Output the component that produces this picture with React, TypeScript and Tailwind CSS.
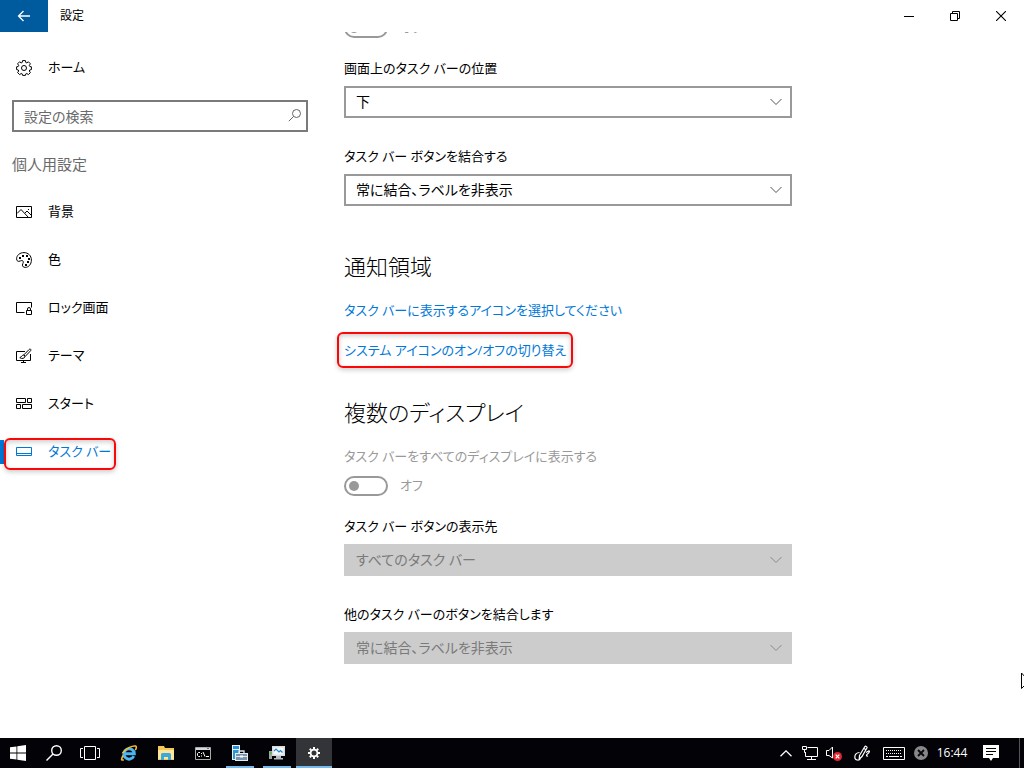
import { useState } from "react";
import type { ReactNode } from "react";

type NavItem = { id: string; label: string; icon: ReactNode };

function NavIcon({ children }: { children: ReactNode }) {
  return (
    <svg
      viewBox="0 0 16 16"
      className="size-4 shrink-0"
      fill="none"
      stroke="currentColor"
      strokeWidth="1"
      aria-hidden="true"
    >
      {children}
    </svg>
  );
}

const NAV_ITEMS: NavItem[] = [
  {
    id: "background",
    label: "背景",
    icon: (
      <NavIcon>
        <path d="M.5 2.500h15v11H.5zM1 9.500l4-4 7.500 8M9 9l2-2 4.500 4.500" />
        <path d="M12 5h1v1h-1z" fill="currentColor" stroke="none" />
      </NavIcon>
    ),
  },
  {
    id: "colors",
    label: "色",
    icon: (
      <NavIcon>
        <path d="M8 .6C3.800.6.6 3.300.6 6.800c0 1.700 1 2.600 2.200 2.600 1.300 0 1.900-.9 3-.9 1 0 1.500.7 1.500 1.700 0 1.200-.9 1.600-.9 2.900 0 1.400 1.200 2.300 2.800 2.300 3.500 0 6.200-3.200 6.200-7.300C15.400 3.700 12.200.6 8 .6z" />
        <g fill="currentColor" stroke="none">
          <path d="M3 5h2v2H3zM6 3h2v2H6zM10 3h2v2h-2zM12 6h2v2h-2zM11 9h2v2h-2zM9 12h2v2H9z" />
        </g>
      </NavIcon>
    ),
  },
  {
    id: "lockscreen",
    label: "ロック画面",
    icon: (
      <NavIcon>
        <path d="M8.500 12.500h-8v-10h15v5M10.500 10.500h5v4h-5zM11.500 10.500v-1.500a1.500 1.500 0 0 1 3 0v1.500" />
      </NavIcon>
    ),
  },
  {
    id: "themes",
    label: "テーマ",
    icon: (
      <NavIcon>
        <path d="M9 3.500H.5v9h14V6M5 14.500h5M7.500 12.500v2" />
        <path d="M14.500 1.200c.8.6.3 1.300-.2 1.900L9.300 8.300 7.800 6.900l5.100-5.200c.5-.5 1.100-.9 1.600-.5zM7.600 7.200c-2-.1-2 1.900-3.800 2.500 2 1.400 5 .8 5.200-1.200z" />
      </NavIcon>
    ),
  },
  {
    id: "start",
    label: "スタート",
    icon: (
      <NavIcon>
        <path d="M.5 2.500h9v4h-9zM11.500 2.500h4v4h-4zM.5 8.500h4v4h-4zM6.500 8.500h9v4h-9z" />
      </NavIcon>
    ),
  },
  {
    id: "taskbar",
    label: "タスク バー",
    icon: (
      <NavIcon>
        <path d="M.5 3.500h15v8H.5zM.5 9.500h15" />
      </NavIcon>
    ),
  },
];

function GearIcon() {
  return (
    <NavIcon>
      <path d="M6.600.6h2.800l.4 1.900 1 .4 1.600-1.100 2 2-1.100 1.600.4 1 1.700.4v2.800l-1.700.4-.4 1 1.100 1.600-2 2-1.600-1.100-1 .4-.4 1.500H6.600l-.4-1.500-1-.4-1.600 1.100-2-2 1.100-1.600-.4-1L.6 9.600V6.800l1.700-.4.4-1-1.100-1.600 2-2 1.600 1.100 1-.4z" />
      <circle cx="8" cy="8" r="2.500" />
    </NavIcon>
  );
}

// Red frame laid over the element it marks
function Highlight({ className }: { className: string }) {
  return (
    <span
      aria-hidden="true"
      className={`pointer-events-none absolute rounded-md border-2 border-[#fa0808] shadow-[0_2px_5px_rgba(0,0,0,0.2),inset_0_2px_5px_rgba(0,0,0,0.2)] ${className}`}
    />
  );
}

function SelectField({
  id,
  label,
  value,
  disabled,
}: {
  id: string;
  label: string;
  value: string;
  disabled?: boolean;
}) {
  return (
    <div>
      <label htmlFor={id} className="mb-2 block text-[13px] leading-5">
        {label}
      </label>
      <div className="relative">
        <select
          id={id}
          disabled={disabled}
          className="block h-8 w-full appearance-none border-2 border-[#999] bg-white px-[10px] text-sm text-black disabled:border-[#ccc] disabled:bg-[#ccc] disabled:text-[#7a7a7a] disabled:opacity-100"
        >
          <option>{value}</option>
        </select>
        <svg
          viewBox="0 0 12 8"
          className={`pointer-events-none absolute top-3 right-[10px] h-2 w-3 ${disabled ? "text-[#8a8a8a]" : "text-[#555]"}`}
          fill="none"
          stroke="currentColor"
          aria-hidden="true"
        >
          <path d="M.5 1 6 6.500 11.500 1" />
        </svg>
      </div>
    </div>
  );
}

function Toggle({ label }: { label: string }) {
  return (
    <div className="flex h-5 items-center gap-3 text-[13px] text-[#999]">
      <input
        type="checkbox"
        role="switch"
        disabled
        aria-label={label}
        className="h-5 w-11 shrink-0 appearance-none rounded-full border-2 border-[#999] before:m-[3px] before:block before:size-[10px] before:rounded-full before:bg-[#999]"
      />
      <span>オフ</span>
    </div>
  );
}

function TitleBar() {
  return (
    <header className="flex h-8 shrink-0 items-center bg-white">
      <button type="button" aria-label="戻る" className="flex h-8 w-12 items-center justify-center bg-[#005a9e] text-white">
        <svg viewBox="0 0 14 12" className="h-3 w-[14px]" fill="none" stroke="currentColor" strokeWidth="1.300">
          <path d="M13 6H1.500M6.500 1l-5 5 5 5" />
        </svg>
      </button>
      <h1 className="ml-3 text-xs">設定</h1>
      <div className="ml-auto flex">
        <button type="button" aria-label="最小化" className="flex h-8 w-[46px] items-center justify-center">
          <svg viewBox="0 0 10 10" className="size-[10px]" stroke="currentColor">
            <path d="M0 5.500h10" />
          </svg>
        </button>
        <button type="button" aria-label="元に戻す" className="flex h-8 w-[46px] items-center justify-center">
          <svg viewBox="0 0 10 10" className="size-[10px]" fill="none" stroke="currentColor">
            <path d="M.5 2.500h7v7h-7zM2.500 2.500v-2h7v7h-2" />
          </svg>
        </button>
        <button type="button" aria-label="閉じる" className="flex h-8 w-[46px] items-center justify-center">
          <svg viewBox="0 0 10 10" className="size-[10px]" stroke="currentColor" strokeWidth="1.100">
            <path d="M0 0l10 10M10 0L0 10" />
          </svg>
        </button>
      </div>
    </header>
  );
}

function Sidebar() {
  const [active, setActive] = useState("taskbar");

  return (
    <nav className="w-80 shrink-0 pt-3">
      <a href="#home" className="flex h-12 items-center gap-4 pl-4 text-[13px]">
        <GearIcon />
        <span>ホーム</span>
      </a>

      <div className="relative mx-3 mt-2">
        <input
          type="text"
          aria-label="設定の検索"
          placeholder="設定の検索"
          className="block h-8 w-full border-2 border-[#7a7a7a] bg-white px-[10px] text-sm placeholder:text-[#6a6a6a]"
        />
        <svg
          viewBox="0 0 14 14"
          className="pointer-events-none absolute top-2 right-1.5 size-[14px] text-[#666]"
          fill="none"
          stroke="currentColor"
          aria-hidden="true"
        >
          <circle cx="8.500" cy="5.500" r="4" />
          <path d="M5.600 8.400.8 13.200" />
        </svg>
      </div>

      <h2 className="mt-[22px] mb-[14px] pl-3 text-[15px] leading-5 text-[#6a6a6a]">個人用設定</h2>

      <ul>
        {NAV_ITEMS.map((item) => (
          <li key={item.id} className="relative">
            <a
              href={`#${item.id}`}
              onClick={() => setActive(item.id)}
              className={`flex h-12 items-center gap-4 pl-4 text-[13px] ${active === item.id ? "text-[#0078d7]" : ""}`}
            >
              {active === item.id && <span className="absolute top-3 left-0 h-6 w-1 bg-[#0078d7]" />}
              {item.icon}
              <span>{item.label}</span>
            </a>
            {item.id === "taskbar" && <Highlight className="top-[10px] left-1 h-8 w-28" />}
          </li>
        ))}
      </ul>
    </nav>
  );
}

function TaskButton({
  label,
  running,
  active,
  children,
}: {
  label: string;
  running?: boolean;
  active?: boolean;
  children: ReactNode;
}) {
  return (
    <button
      type="button"
      aria-label={label}
      className={`relative flex h-full w-9 items-center justify-center ${active ? "bg-[#333438]" : ""}`}
    >
      {children}
      {running && <span className={`absolute bottom-0 h-0.5 bg-[#76b9ed] ${active ? "inset-x-0" : "inset-x-1"}`} />}
    </button>
  );
}

function Taskbar() {
  return (
    <footer className="flex h-[30px] shrink-0 items-stretch bg-[#020207] text-white">
      <TaskButton label="スタート">
        <svg viewBox="0 0 16 16" className="size-4" fill="currentColor">
          <path d="M0 2.300 6.500 1.400v6.100H0zM7.300 1.300 16 0v7.500H7.300zM0 8.400h6.500v6.200L0 13.700zM7.300 8.400H16V16l-8.700-1.300z" />
        </svg>
      </TaskButton>
      <TaskButton label="検索">
        <svg viewBox="0 0 16 16" className="size-4" fill="none" stroke="currentColor" strokeWidth="1.400">
          <circle cx="10.500" cy="5.500" r="4.800" />
          <path d="M7 9 .5 15.500" />
        </svg>
      </TaskButton>
      <TaskButton label="タスク ビュー">
        <svg viewBox="0 0 20 14" className="h-[14px] w-5" fill="none" stroke="currentColor">
          <path d="M4.500.5h11v13h-11zM3 2.500H.5v9H3M17 2.500h2.500v9H17" />
        </svg>
      </TaskButton>

      <div className="ml-[3px] flex gap-px">
        <TaskButton label="Internet Explorer">
          <svg viewBox="0 0 18 16" className="h-4 w-[18px]" fill="none">
            <path
              d="M13.800 11.200A5.200 5.200 0 1 1 14.300 8.800H5"
              stroke="#4db5f0"
              strokeWidth="3"
            />
            <path
              d="M3.200 10.500C1 14 1 15.800 3.800 14.700M2.500 8C6 3 13 .3 15.600 1.100c1.200.5.800 2.200-.3 4"
              stroke="#f4bd2c"
              strokeWidth="1.600"
            />
          </svg>
        </TaskButton>
        <TaskButton label="エクスプローラー">
          <svg viewBox="0 0 16 14" className="h-[14px] w-4">
            <path d="M0 0h6l1 2h9v12H0z" fill="#f5c955" />
            <path d="M0 4h16v9H0z" fill="#ffe59c" />
            <path d="M3 14V8.500Q3 7 4.500 7h7Q13 7 13 8.500V14h-3v-3H6v3z" fill="#3ba9dc" />
          </svg>
        </TaskButton>
        <TaskButton label="コマンド プロンプト">
          <svg viewBox="0 0 16 13" className="h-[13px] w-4" fill="none">
            <path d="M.5.500h15v12H.5z" fill="#000" stroke="#aaa" />
            <path d="M1 1h14v2H1z" fill="#d5d9df" />
            <path d="M12 1.500h2" stroke="#4c72a8" />
            <path d="M5 5.500H3.500l-1 1v2l1 1H5M6.500 6v1M6.500 8.500v1M8 5l2 4.500M11 9.500h3" stroke="#fff" />
          </svg>
        </TaskButton>
        <TaskButton label="サーバー マネージャー" running>
          <svg viewBox="0 0 16 16" className="size-4">
            <path d="M0 0h8v15H0z" fill="#e8f4fb" />
            <path d="M1 1h6v3H1zM1 5h6v9H1z" fill="#2b95db" />
            <path d="M7 8V6h5v2" fill="none" stroke="#dce5ec" strokeWidth="1.300" />
            <path d="M3 8h13v8H3z" fill="#e3ebf1" />
            <path d="M4 9h11v2H4zM4 12h11v3H4z" fill="#7894ac" />
            <path d="M8 10.500h3v2H8z" fill="#fff" />
          </svg>
        </TaskButton>
        <TaskButton label="パフォーマンス モニター" running>
          <svg viewBox="0 0 16 14" className="h-[14px] w-4">
            <path d="M0 5h3v8H0z" fill="#9ba5a5" />
            <path d="M1 6h2v2H1z" fill="#59ba4b" />
            <path d="M3 0h13v10H3z" fill="#d9dcdc" />
            <path d="M4.500 1.500h10v7h-10z" fill="#f0faff" />
            <path d="m5 5 2-2 3 3 1.500-1.500 2 2" fill="none" stroke="#2685c9" strokeWidth="1.200" />
            <path d="M7 10h5v2h2v1.500H5V12h2z" fill="#b8bcbc" />
          </svg>
        </TaskButton>
        <TaskButton label="設定" running active>
          <svg viewBox="0 0 12 12" className="size-3" fill="none" stroke="currentColor">
            <circle cx="6" cy="6" r="3.400" strokeWidth="1.800" />
            <path
              d="M6 0v2M6 10v2M0 6h2M10 6h2M1.800 1.800l1.400 1.400M8.800 8.800l1.400 1.400M1.800 10.200l1.400-1.400M8.800 3.200l1.400-1.400"
              strokeWidth="2"
            />
          </svg>
        </TaskButton>
      </div>

      <div className="ml-auto flex items-center">
        <button type="button" aria-label="隠れているインジケーター" className="flex w-6 justify-center">
          <svg viewBox="0 0 12 7" className="h-[7px] w-3" fill="none" stroke="currentColor" strokeWidth="1.300">
            <path d="M.5 6.300 6 .9l5.500 5.400" />
          </svg>
        </button>
        <button type="button" aria-label="ネットワーク" className="flex w-6 justify-center">
          <svg viewBox="0 0 16 14" className="h-[14px] w-4" fill="none" stroke="currentColor">
            <path d="M5.500 1.500h10v9h-12V6M9.500 10.500v3M5 13.500h9M.5.500h4v3h-4zM2.500 3.500v3h1" />
          </svg>
        </button>
        <button type="button" aria-label="音量" className="flex w-6 justify-center">
          <svg viewBox="0 0 16 15" className="h-[15px] w-4" fill="none">
            <path d="M.5 4.500H3L6.500 1v11L3 9.500H.5z" stroke="#fff" />
            <circle cx="11.500" cy="10.500" r="4.500" fill="#e02430" />
            <path d="m9.700 8.700 3.600 3.600m0-3.600-3.600 3.600" stroke="#fff" strokeWidth="1.200" />
          </svg>
        </button>
        <button type="button" aria-label="Windows Ink ワークスペース" className="ml-1 flex w-6 justify-center">
          <svg viewBox="0 0 16 16" className="size-4" fill="none" stroke="currentColor" strokeWidth="1.200">
            <path d="M5.500 10.500 10.700 1.800c.8-1.200 2.800-.2 2.200 1.200L8 11.500 5.200 14zM10 3.500l2 1.200M5.500 7.500C2.500 7.500.8 9.800.8 12c0 4 4.700 3.500 5.700 1.500M12 7.500l2.500-1.500c1.500-.5 1 1.500-.5 2.500-2 1.500-2 3 0 2.500" />
          </svg>
        </button>
        <button type="button" aria-label="タッチ キーボード" className="ml-1.5 flex w-7 justify-center">
          <svg viewBox="0 0 22 13" className="h-[13px] w-[22px]" fill="none" stroke="currentColor">
            <path d="M.5.500h21v12H.5z" />
            <path d="M3 3.500h16M3 6.500h16" strokeDasharray="1 1" />
            <path d="M3 9.500h2M6 9.500h10M17 9.500h2" />
          </svg>
        </button>
        <button type="button" aria-label="入力無効" className="flex w-[26px] justify-center">
          <svg viewBox="0 0 14 14" className="size-[14px]">
            <circle cx="7" cy="7" r="7" fill="#888" />
            <path d="m4 4 6 6m0-6-6 6" stroke="#08080c" strokeWidth="1.800" />
          </svg>
        </button>
        <time className="w-9 text-center font-['Open_Sans',sans-serif] text-xs">16:44</time>
        <button type="button" aria-label="アクション センター" className="ml-1.5 flex w-[30px] justify-center">
          <svg viewBox="0 0 16 16" className="size-4">
            <path d="M0 0h16v13h-6l-2 3-2-3H0z" fill="#fff" />
            <path d="M3 3.500h10M3 6.500h10M3 9.500h7" stroke="#000" />
          </svg>
        </button>
        <button type="button" aria-label="デスクトップの表示" className="ml-[13px] h-[30px] w-[5px] border-l border-[#555]" />
      </div>
    </footer>
  );
}

export default function App() {
  return (
    <div className="relative flex h-screen flex-col overflow-hidden bg-white font-['Open_Sans','Noto_Sans_CJK_JP',sans-serif] text-[13px] text-black [font-feature-settings:'palt']">
      <TitleBar />

      <div className="flex min-h-0 flex-1">
        <Sidebar />

        {/* Pane sits scrolled to its end, earlier rows slide under the title bar */}
        <main className="flex min-w-0 flex-1 flex-col justify-end overflow-hidden px-6 pb-[74px]">
          <div className="w-full max-w-[448px]">
            <Toggle label="タスク バーの設定" />

            <div className="mt-5 flex flex-col gap-7">
              <SelectField id="position" label="画面上のタスク バーの位置" value="下" />
              <SelectField id="combine" label="タスク バー ボタンを結合する" value="常に結合、ラベルを非表示" />
            </div>

            <h2 className="mt-11 mb-[18px] text-[22px] leading-8 font-light">通知領域</h2>
            <div className="flex flex-col items-start gap-5 leading-5 text-[#0078d7]">
              <a href="#icons">タスク バーに表示するアイコンを選択してください</a>
              <a href="#system-icons" className="relative">
                システム アイコンのオン/オフの切り替え
                <Highlight className="-inset-x-[7px] -inset-y-2" />
              </a>
            </div>

            <h2 className="mt-9 mb-[18px] text-[22px] leading-8 font-light">複数のディスプレイ</h2>
            <p className="mb-[10px] leading-5 text-[#999]">タスク バーをすべてのディスプレイに表示する</p>
            <Toggle label="タスク バーをすべてのディスプレイに表示する" />

            <div className="mt-5 flex flex-col gap-7">
              <SelectField id="buttons" label="タスク バー ボタンの表示先" value="すべてのタスク バー" disabled />
              <SelectField
                id="combine-other"
                label="他のタスク バーのボタンを結合します"
                value="常に結合、ラベルを非表示"
                disabled
              />
            </div>
          </div>
        </main>
      </div>

      <Taskbar />

      <svg
        viewBox="0 0 12 19"
        className="pointer-events-none absolute top-[672px] -right-[9px] h-[19px] w-3"
        fill="#fff"
        stroke="#000"
        aria-hidden="true"
      >
        <path d="M.5 1v15.500l3.500-3.500 2.500 5 2-1-2.300-4.500H11z" />
      </svg>
    </div>
  );
}
